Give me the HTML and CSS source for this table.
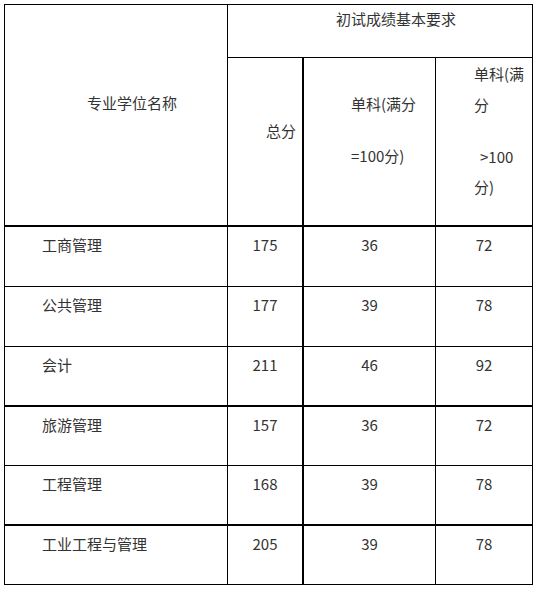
FILE: index.html
```html
<!DOCTYPE html>
<html lang="zh-CN">
<head>
<meta charset="utf-8">
<title>初试成绩基本要求</title>
<link rel="stylesheet" href="styles.css">
</head>
<body>
<div class="sheet">
  <div class="cell head-name">专业学位名称</div>
  <div class="cell head-group">初试成绩基本要求</div>
  <div class="cell head-total split">总分</div>
  <div class="cell head-single">
    <div class="ln">单科(满分</div>
    <div class="ln ln-gap">=100分)</div>
  </div>
  <div class="cell head-single2">
    <div class="ln">单科(满</div>
    <div class="ln ln-2">分</div>
    <div class="ln ln-3">&gt;100</div>
    <div class="ln ln-4">分)</div>
  </div>

  <div class="cell name">工商管理</div>
  <div class="cell num split">175</div>
  <div class="cell num">36</div>
  <div class="cell num">72</div>

  <div class="cell name">公共管理</div>
  <div class="cell num split">177</div>
  <div class="cell num">39</div>
  <div class="cell num">78</div>

  <div class="cell name thick">会计</div>
  <div class="cell num split thick">211</div>
  <div class="cell num thick">46</div>
  <div class="cell num thick">92</div>

  <div class="cell name">旅游管理</div>
  <div class="cell num split">157</div>
  <div class="cell num">36</div>
  <div class="cell num">72</div>

  <div class="cell name thick">工程管理</div>
  <div class="cell num split thick">168</div>
  <div class="cell num thick">39</div>
  <div class="cell num thick">78</div>

  <div class="cell name">工业工程与管理</div>
  <div class="cell num split">205</div>
  <div class="cell num">39</div>
  <div class="cell num">78</div>
</div>
</body>
</html>
```

FILE: styles.css
```css
html, body {
  margin: 0;
  padding: 0;
  background: #ffffff;
}

body {
  font-family: "Noto Sans CJK SC", "Noto Sans", sans-serif;
  font-size: 15px;
  line-height: 20px;
  color: #333333;
}

.sheet {
  margin: 4px;
  display: grid;
  grid-template-columns: 223px 76px 132px 97px;
  grid-template-rows: 53px 169px 60px 60px 60px 59px 60px 59px;
  width: 529px;
  box-sizing: border-box;
  border-top: 1px solid #000;
  border-left: 1px solid #000;
}

.cell {
  box-sizing: border-box;
  border-right: 1px solid #000;
  border-bottom: 1px solid #000;
  white-space: nowrap;
}

.split {
  border-right-width: 2px;
}

.thick {
  border-bottom-width: 2px;
}

.head-name {
  grid-row: 1 / span 2;
  grid-column: 1;
  border-bottom-width: 2px;
  padding: 88px 0 0 82px;
}

.head-group {
  grid-row: 1;
  grid-column: 2 / span 3;
  padding: 4px 0 0 108px;
}

.head-total {
  grid-row: 2;
  grid-column: 2;
  border-bottom-width: 2px;
  padding: 63px 0 0 38px;
}

.head-single {
  grid-row: 2;
  grid-column: 3;
  border-bottom-width: 2px;
  padding: 36px 0 0 47px;
}

.head-single2 {
  grid-row: 2;
  grid-column: 4;
  border-bottom-width: 2px;
  padding: 6px 0 0 38px;
}

.ln-gap {
  margin-top: 32px;
}

.ln-2 {
  margin-top: 11px;
}

.ln-3 {
  margin-top: 32px;
  padding-left: 6px;
}

.ln-4 {
  margin-top: 10px;
}

.name {
  padding: 8px 0 0 37px;
}

.num {
  padding-top: 8px;
  text-align: center;
}
```
